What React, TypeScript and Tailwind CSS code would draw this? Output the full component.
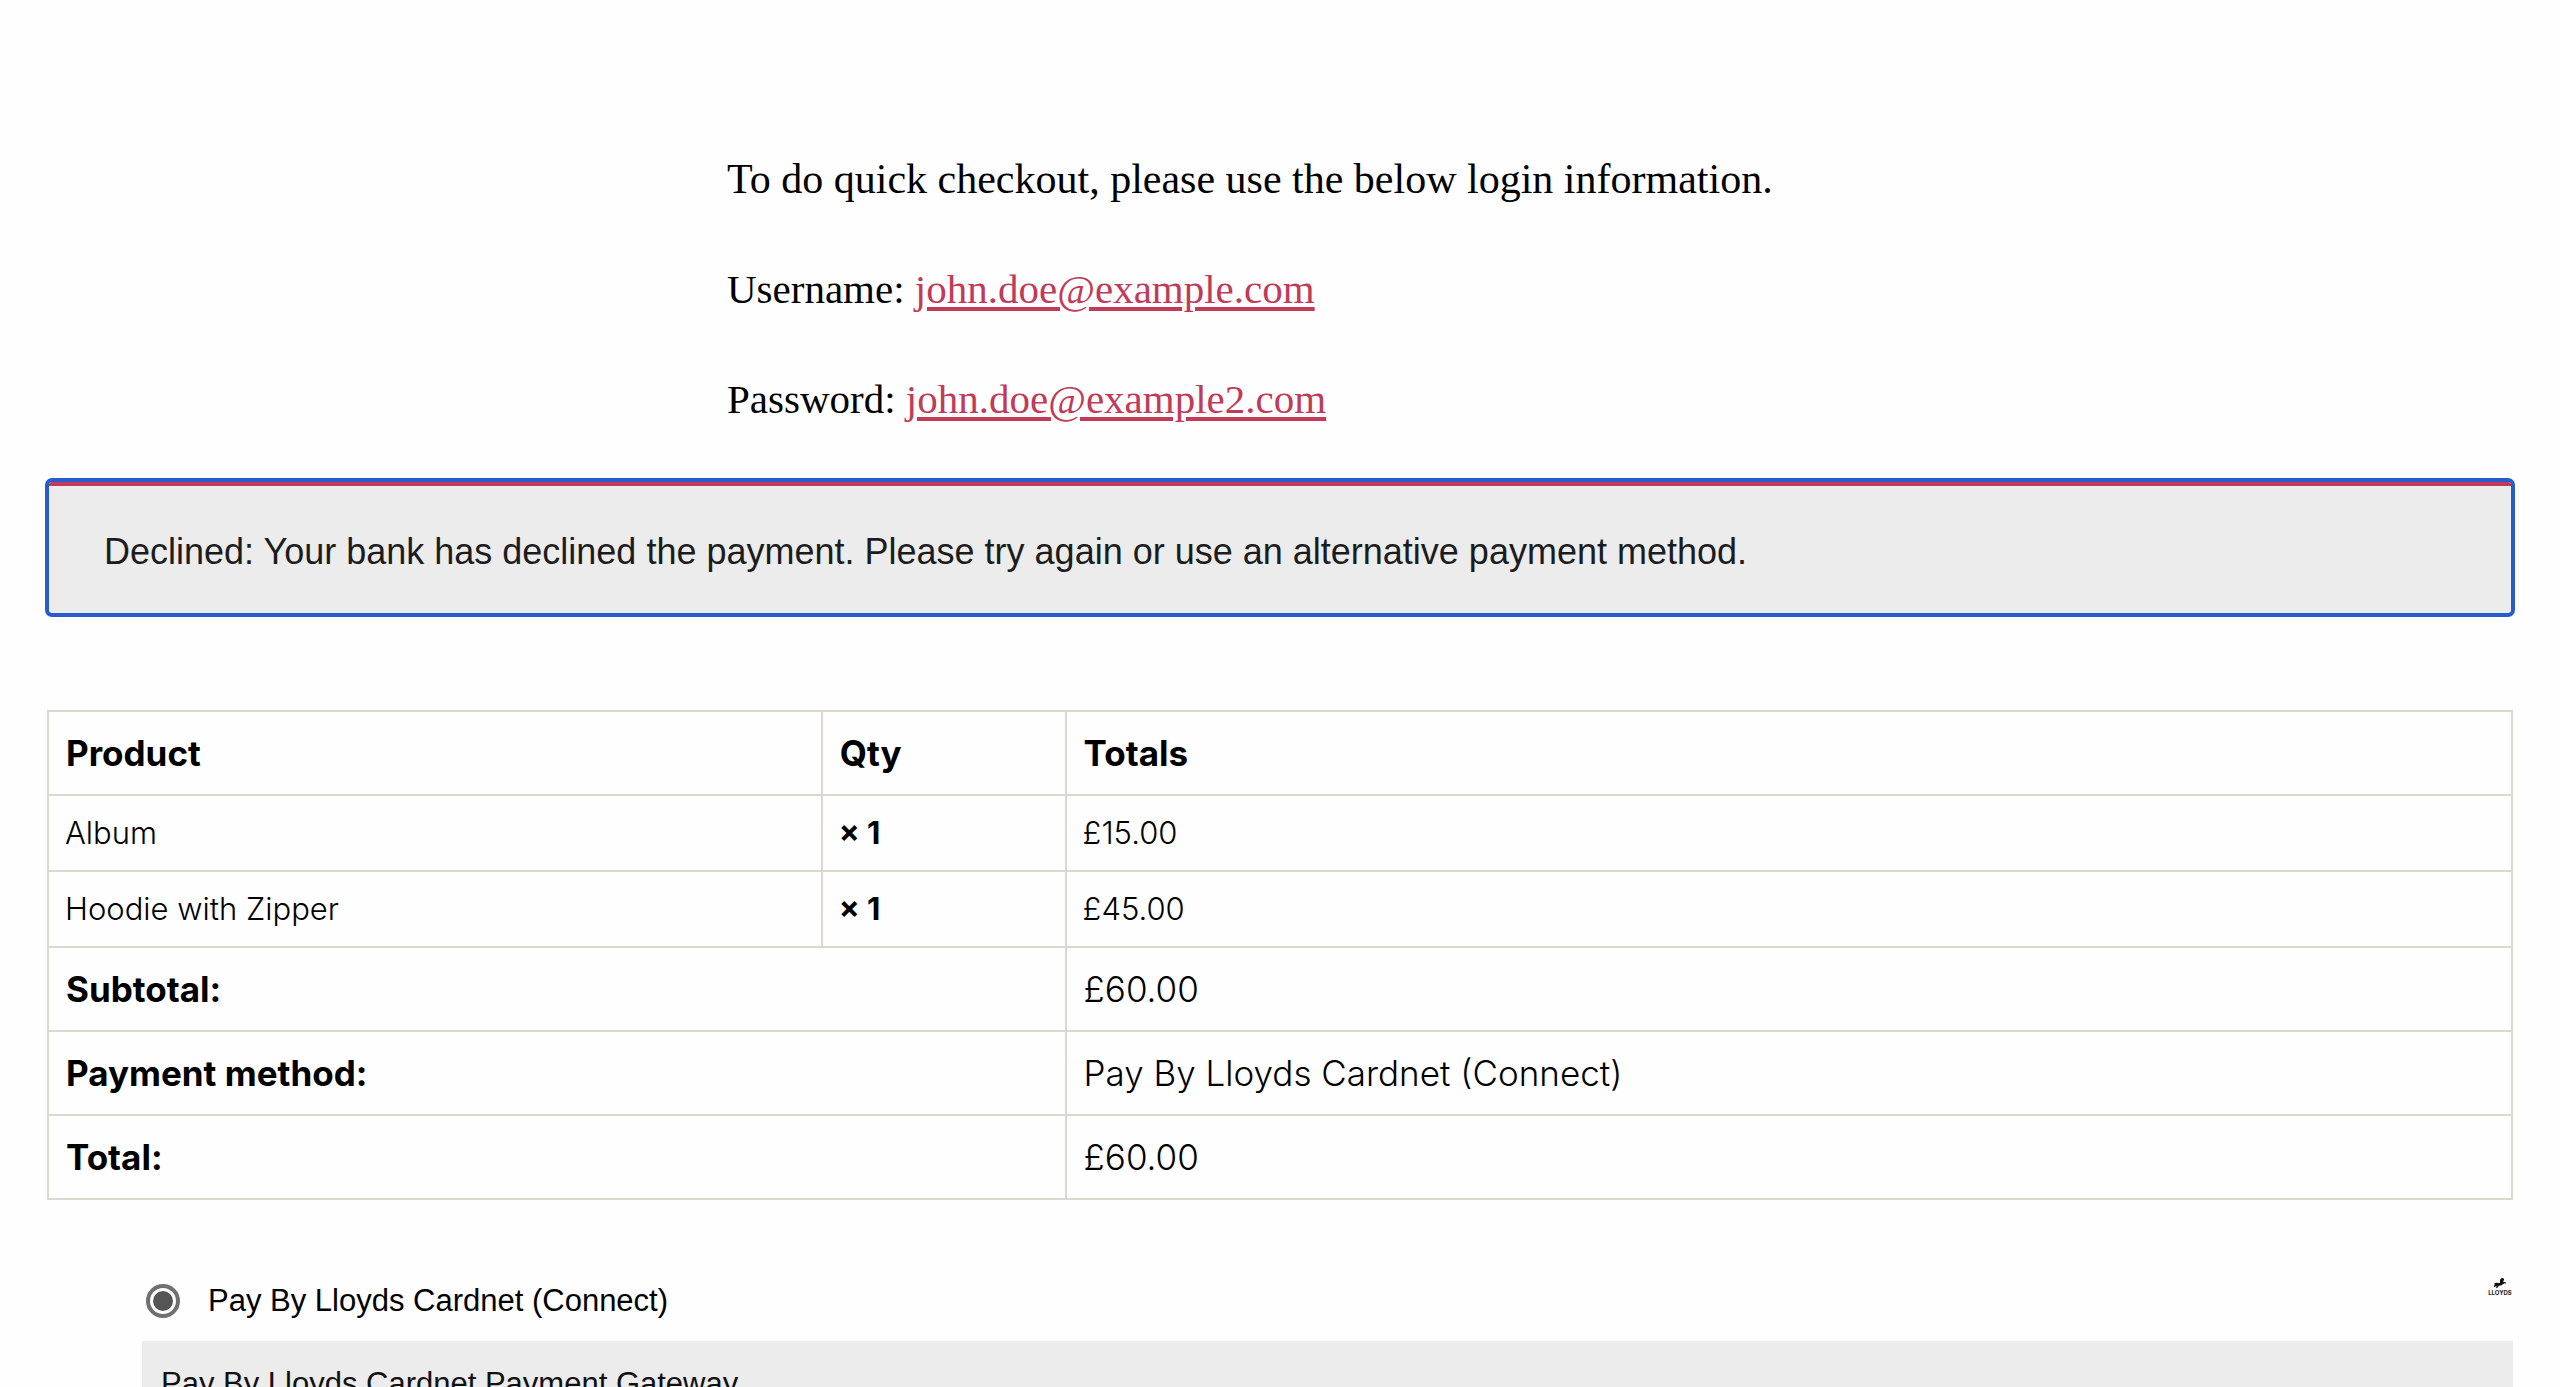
import React, { useState } from 'react';

interface OrderItem {
    id: number;
    name: string;
    qty: number;
    total: string;
}

interface SummaryRow {
    label: string;
    value: string;
}

const items: OrderItem[] = [
    { id: 1, name: "Album", qty: 1, total: "£15.00" },
    { id: 2, name: "Hoodie with Zipper", qty: 1, total: "£45.00" },
];

const summary: SummaryRow[] = [
    { label: "Subtotal:", value: "£60.00" },
    { label: "Payment method:", value: "Pay By Lloyds Cardnet (Connect)" },
    { label: "Total:", value: "£60.00" },
];

const MailLink: React.FC<{ email: string }> = ({ email }) => (
    <a
        href={`mailto:${email}`}
        className="text-[#c13a58] underline decoration-[4px] underline-offset-[4px]"
    >
        {email}
    </a>
);

const LoginHint: React.FC = () => (
    <div className="mx-auto flex w-full max-w-[1106px] flex-col gap-[50px] font-['Liberation_Serif',serif] text-[41px] leading-[60px] text-black">
        <p className="text-[42px]">To do quick checkout, please use the below login information.</p>
        <p>Username: <MailLink email="john.doe@example.com" /></p>
        <p>Password: <MailLink email="john.doe@example2.com" /></p>
    </div>
);

const Notice: React.FC<{ message: string }> = ({ message }) => (
    <div
        role="alert"
        className="rounded-[3px] border-t-4 border-[#c13a58] bg-[#ececec] px-[55px] pt-10 pb-[35px] text-[36px] leading-[52px] text-[#1c1c1c] outline-4 outline-[#265ccb]"
    >
        {message}
    </div>
);

const OrderTable: React.FC = () => (
    <table className="w-full table-fixed border-collapse text-left font-['Inter',sans-serif] text-black">
        <colgroup>
            <col className="w-[31.4%]" />
            <col className="w-[9.9%]" />
            <col />
        </colgroup>
        <thead>
            <tr className="text-[35px] leading-[50px]">
                <th className="border-2 border-[#dcd8cd] px-[17px] py-4 font-bold">Product</th>
                <th className="border-2 border-[#dcd8cd] px-[17px] py-4 font-bold">Qty</th>
                <th className="border-2 border-[#dcd8cd] px-[17px] py-4 font-bold">Totals</th>
            </tr>
        </thead>
        <tbody>
            {items.map((item) => (
                <tr key={item.id} className="text-[31px] leading-[46px]">
                    <td className="border-2 border-[#dcd8cd] px-4 py-[14px] font-[350]">{item.name}</td>
                    <td className="border-2 border-[#dcd8cd] px-4 py-[14px] font-bold">&times;&nbsp;{item.qty}</td>
                    <td className="border-2 border-[#dcd8cd] px-4 py-[14px] font-[350]">{item.total}</td>
                </tr>
            ))}
        </tbody>
        <tfoot>
            {summary.map((row) => (
                <tr key={row.label} className="text-[35px] leading-[50px]">
                    <th scope="row" colSpan={2} className="border-2 border-[#dcd8cd] px-[17px] py-4 font-bold">{row.label}</th>
                    <td className="border-2 border-[#dcd8cd] px-[17px] py-4 font-[350]">{row.value}</td>
                </tr>
            ))}
        </tfoot>
    </table>
);

const LloydsLogo: React.FC = () => (
    <svg viewBox="0 0 26 18" className="mt-1 h-[18px] w-[26px]" role="img" aria-label="Lloyds">
        <path
            d="M7.5 5.2 9 4.8l4 .2V2.4L13.6.8 15 0l1.8.6.4 1.8-1 .4.2 1.2 2.2.2.6 1.6-1.4-.5-2 .9-1.6 1.4-2.4.2-.8 1.4-1.4 1-.6-.4.9-1.4-1.3-.2-.9 1-1-.4.7-1.6z"
            fill="#0b1210"
        />
        <text x="13" y="17" textAnchor="middle" fontSize="6" fontWeight="700" fontFamily="Inter, sans-serif" fill="#222">LLOYDS</text>
    </svg>
);

const PaymentMethods: React.FC = () => {
    const [method, setMethod] = useState("lloyds");

    return (
        <div className="pl-[95px]">
            <div className="flex items-start justify-between">
                <label htmlFor="pay-lloyds" className="flex items-center gap-[28px] pt-1 pl-[4px] text-[31px] leading-[46px] text-black">
                    <input
                        id="pay-lloyds"
                        type="radio"
                        name="payment_method"
                        value="lloyds"
                        checked={method === "lloyds"}
                        onChange={(e) => setMethod(e.target.value)}
                        className="grid size-[34px] appearance-none place-content-center rounded-full border-4 border-[#707070] bg-white before:size-5 before:rounded-full before:content-[''] checked:before:bg-[#555]"
                    />
                    Pay By Lloyds Cardnet (Connect)
                </label>
                <LloydsLogo />
            </div>
            <div className="mt-[17px] bg-[#ececec] px-[19px] py-5 text-[31px] leading-[46px] text-[#111]">
                <p>Pay By Lloyds Cardnet Payment Gateway</p>
            </div>
        </div>
    );
};

export default function App() {
    return (
        <main className="h-screen overflow-y-auto bg-[#fefefe] px-[47px] pt-[149px] font-['Liberation_Sans',sans-serif] [scrollbar-width:none]">
            <LoginHint />
            <div className="mx-0.5 mt-[53px]">
                <Notice message="Declined: Your bank has declined the payment. Please try again or use an alternative payment method." />
            </div>
            <div className="mt-[97px]">
                <OrderTable />
            </div>
            <div className="mt-[74px]">
                <PaymentMethods />
            </div>
        </main>
    );
}
